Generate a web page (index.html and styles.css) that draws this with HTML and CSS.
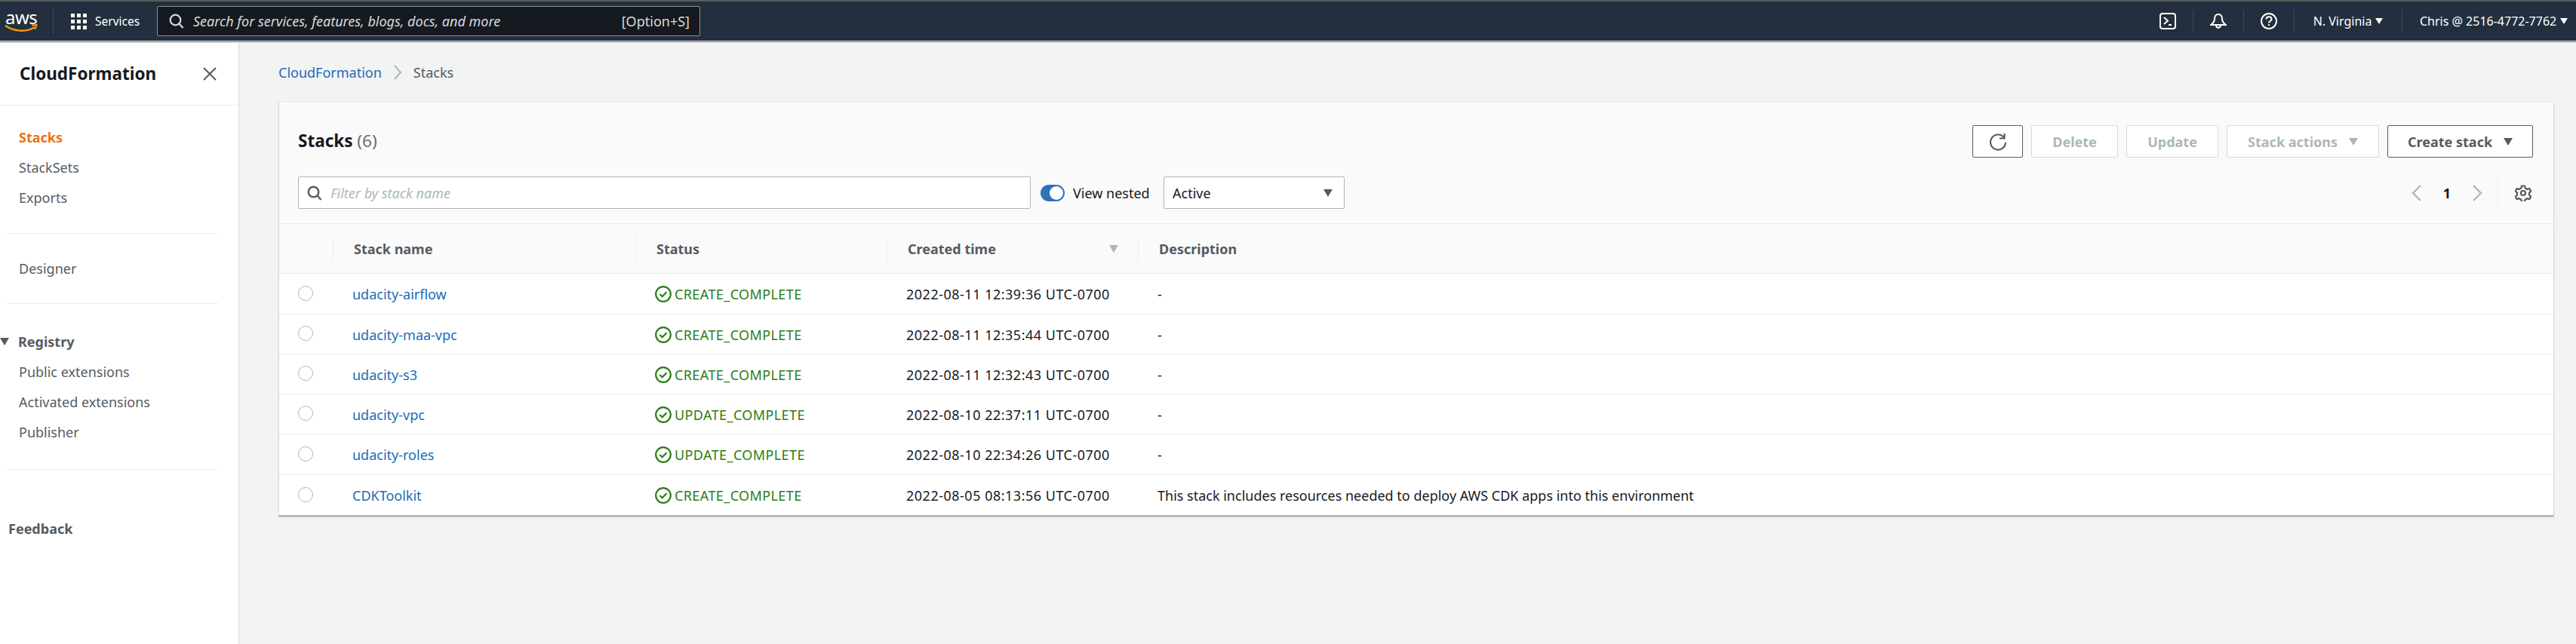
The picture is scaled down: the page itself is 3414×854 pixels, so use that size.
FILE: index.html
```html
<!DOCTYPE html>
<html lang="en">
<head>
    <meta charset="UTF-8">
    <meta name="viewport" content="width=device-width, initial-scale=1.0">
    <title>CloudFormation - Stacks</title>
    <link rel="stylesheet" href="styles.css">
</head>
<body>
    <header class="topbar">
        <div class="logo">
            <span class="logo-text">aws</span>
            <svg class="logo-smile" viewBox="0 0 44 11" width="44" height="11"><path d="M1 2c12 8 28 9 39 2" fill="none" stroke="#f90" stroke-width="2.4"/><path d="M36 1.5l6.5-.5-2 6" fill="none" stroke="#f90" stroke-width="2"/></svg>
        </div>
        <div class="services">
            <svg class="grid-icon" viewBox="0 0 21 21" width="21" height="21" fill="#fff"><rect width="5" height="5"/><rect x="8" width="5" height="5"/><rect x="16" width="5" height="5"/><rect y="8" width="5" height="5"/><rect x="8" y="8" width="5" height="5"/><rect x="16" y="8" width="5" height="5"/><rect y="16" width="5" height="5"/><rect x="8" y="16" width="5" height="5"/><rect x="16" y="16" width="5" height="5"/></svg>
            <span>Services</span>
        </div>
        <div class="top-search">
            <svg viewBox="0 0 20 20" width="20" height="20" fill="none" stroke="#d5dbdb" stroke-width="2.2"><circle cx="8.5" cy="8.5" r="6.8"/><path d="M13.5 13.5l5 5.5"/></svg>
            <span class="top-search-text">Search for services, features, blogs, docs, and more</span>
            <span class="top-search-key">[Option+S]</span>
        </div>
        <div class="top-right">
            <div class="top-item">
                <svg viewBox="0 0 22 22" width="22" height="22" fill="none" stroke="#fff" stroke-width="2"><rect x="1" y="1" width="20" height="20" rx="3"/><path d="M6 6l5 4.5L6 15"/><path d="M12 16h4"/></svg>
            </div>
            <div class="top-item">
                <svg viewBox="0 0 22 22" width="22" height="22" fill="none" stroke="#fff" stroke-width="2"><path d="M11 2c-3.500 0-5 3-5 6 0 3-2 6-5 8h20c-3-2-5-5-5-8 0-3-1.500-6-5-6z"/><path d="M8 16c0 5 6 5 6 0"/></svg>
            </div>
            <div class="top-item">
                <svg viewBox="0 0 22 22" width="22" height="22" fill="none" stroke="#fff" stroke-width="2"><circle cx="11" cy="11" r="10"/><path d="M7.500 8.500c0-4.500 7-4.500 7 0 0 2.500-3.500 2.500-3.500 5"/><path d="M11 15v2"/></svg>
            </div>
            <div class="top-item top-region">N. Virginia <span class="top-caret"></span></div>
            <div class="top-item top-user">Chris @ 2516-4772-7762 <span class="top-caret"></span></div>
        </div>
    </header>

    <div class="layout">
        <nav class="sidebar">
            <div class="side-head">
                <span class="side-title">CloudFormation</span>
                <svg viewBox="0 0 18 18" width="18" height="18" fill="none" stroke="#545b64" stroke-width="2"><path d="M1 1l16 16M17 1L1 17"/></svg>
            </div>
            <ul class="side-list side-first">
                <li class="side-active">Stacks</li>
                <li>StackSets</li>
                <li>Exports</li>
            </ul>
            <hr class="side-rule">
            <ul class="side-list side-single">
                <li>Designer</li>
            </ul>
            <hr class="side-rule">
            <div class="side-group"><span class="group-caret"></span>Registry</div>
            <ul class="side-list">
                <li>Public extensions</li>
                <li>Activated extensions</li>
                <li>Publisher</li>
            </ul>
            <hr class="side-rule side-rule-last">
            <div class="side-feedback">Feedback</div>
        </nav>

        <main class="content">
            <div class="crumbs">
                <a class="link">CloudFormation</a>
                <svg viewBox="0 0 12 20" width="12" height="20" fill="none" stroke="#aab7b8" stroke-width="2"><path d="M2 1l8 9-8 9"/></svg>
                <span>Stacks</span>
            </div>

            <section class="panel">
                <div class="panel-head">
                    <div class="head-row">
                        <h2 class="panel-title">Stacks <span class="panel-count">(6)</span></h2>
                        <div class="actions">
                            <button class="btn btn-refresh"><svg viewBox="0 0 22 24" width="22" height="24" fill="none" stroke="#545b64" stroke-width="2.200"><path d="M19 6.500A10 10 0 1 0 21 13"/><path d="M19.500 1v6.500H13"/></svg></button>
                            <button class="btn btn-off btn-delete">Delete</button>
                            <button class="btn btn-off btn-update">Update</button>
                            <button class="btn btn-off btn-stack">Stack actions <span class="caret caret-off"></span></button>
                            <button class="btn btn-create">Create stack <span class="caret"></span></button>
                        </div>
                    </div>
                    <div class="filter-row">
                        <div class="filter">
                            <svg viewBox="0 0 20 20" width="20" height="20" fill="none" stroke="#545b64" stroke-width="2.400"><circle cx="8.500" cy="8.500" r="6.800"/><path d="M13.500 13.500l5 5.500"/></svg>
                            <span>Filter by stack name</span>
                        </div>
                        <div class="nested">
                            <span class="toggle"><span class="toggle-knob"></span></span>
                            <span>View nested</span>
                        </div>
                        <div class="select"><span>Active</span><span class="caret"></span></div>
                        <div class="pager">
                            <svg viewBox="0 0 14 22" width="14" height="22" fill="none" stroke="#aab7b8" stroke-width="2.400"><path d="M12 1L2 11l10 10"/></svg>
                            <span class="page-num">1</span>
                            <svg viewBox="0 0 14 22" width="14" height="22" fill="none" stroke="#aab7b8" stroke-width="2.400"><path d="M2 1l10 10L2 21"/></svg>
                        </div>
                        <div class="settings">
                            <svg viewBox="0 0 22 22" width="22" height="22" fill="none" stroke="#545b64" stroke-width="2.200"><circle cx="11" cy="11" r="3"/><path d="M9 1.500h4l.700 3 2.600 1.500 3-.900 2 3.400-2.300 2.100v3l2.300 2.100-2 3.400-3-.900-2.600 1.500-.700 3H9l-.700-3-2.600-1.500-3 .900-2-3.400 2.300-2.100v-3L.700 8.500l2-3.400 3 .900L8.300 4.500z"/></svg>
                        </div>
                    </div>
                </div>

                <table class="stacks">
                    <colgroup>
                        <col class="col-radio">
                        <col class="col-name">
                        <col class="col-status">
                        <col class="col-time">
                        <col>
                    </colgroup>
                    <thead>
                        <tr>
                            <th></th>
                            <th><div class="th-in">Stack name</div></th>
                            <th><div class="th-in">Status</div></th>
                            <th><div class="th-in th-sort">Created time <span class="caret caret-off"></span></div></th>
                            <th><div class="th-in">Description</div></th>
                        </tr>
                    </thead>
                    <tbody>
                        <tr>
                            <td><span class="radio"></span></td>
                            <td><a class="link">udacity-airflow</a></td>
                            <td><div class="status"><svg viewBox="0 0 22 22" width="22" height="22" fill="none" stroke="#2b7d14" stroke-width="2.200"><circle cx="11" cy="11" r="9.800"/><path d="M6.500 11l3.200 3.200 5.800-6"/></svg>CREATE_COMPLETE</div></td>
                            <td class="time">2022-08-11 12:39:36 UTC-0700</td>
                            <td>-</td>
                        </tr>
                        <tr>
                            <td><span class="radio"></span></td>
                            <td><a class="link">udacity-maa-vpc</a></td>
                            <td><div class="status"><svg viewBox="0 0 22 22" width="22" height="22" fill="none" stroke="#2b7d14" stroke-width="2.200"><circle cx="11" cy="11" r="9.800"/><path d="M6.500 11l3.200 3.200 5.800-6"/></svg>CREATE_COMPLETE</div></td>
                            <td class="time">2022-08-11 12:35:44 UTC-0700</td>
                            <td>-</td>
                        </tr>
                        <tr>
                            <td><span class="radio"></span></td>
                            <td><a class="link">udacity-s3</a></td>
                            <td><div class="status"><svg viewBox="0 0 22 22" width="22" height="22" fill="none" stroke="#2b7d14" stroke-width="2.200"><circle cx="11" cy="11" r="9.800"/><path d="M6.500 11l3.200 3.200 5.800-6"/></svg>CREATE_COMPLETE</div></td>
                            <td class="time">2022-08-11 12:32:43 UTC-0700</td>
                            <td>-</td>
                        </tr>
                        <tr>
                            <td><span class="radio"></span></td>
                            <td><a class="link">udacity-vpc</a></td>
                            <td><div class="status"><svg viewBox="0 0 22 22" width="22" height="22" fill="none" stroke="#2b7d14" stroke-width="2.200"><circle cx="11" cy="11" r="9.800"/><path d="M6.500 11l3.200 3.200 5.800-6"/></svg>UPDATE_COMPLETE</div></td>
                            <td class="time">2022-08-10 22:37:11 UTC-0700</td>
                            <td>-</td>
                        </tr>
                        <tr>
                            <td><span class="radio"></span></td>
                            <td><a class="link">udacity-roles</a></td>
                            <td><div class="status"><svg viewBox="0 0 22 22" width="22" height="22" fill="none" stroke="#2b7d14" stroke-width="2.200"><circle cx="11" cy="11" r="9.800"/><path d="M6.500 11l3.200 3.200 5.800-6"/></svg>UPDATE_COMPLETE</div></td>
                            <td class="time">2022-08-10 22:34:26 UTC-0700</td>
                            <td>-</td>
                        </tr>
                        <tr>
                            <td><span class="radio"></span></td>
                            <td><a class="link">CDKToolkit</a></td>
                            <td><div class="status"><svg viewBox="0 0 22 22" width="22" height="22" fill="none" stroke="#2b7d14" stroke-width="2.200"><circle cx="11" cy="11" r="9.800"/><path d="M6.500 11l3.200 3.200 5.800-6"/></svg>CREATE_COMPLETE</div></td>
                            <td class="time">2022-08-05 08:13:56 UTC-0700</td>
                            <td>This stack includes resources needed to deploy AWS CDK apps into this environment</td>
                        </tr>
                    </tbody>
                </table>
            </section>
        </main>
    </div>
</body>
</html>
```

FILE: styles.css
```css
* {
    box-sizing: border-box;
}

body {
    font-family: "Noto Sans", Arial, sans-serif;
    font-size: 18px;
    color: #16191f;
    background-color: #f2f3f3;
    margin: 0;
    height: 854px;
    overflow: hidden;
    display: flex;
    flex-direction: column;
}

/* top bar */
.topbar {
    height: 57px;
    flex-shrink: 0;
    display: flex;
    align-items: center;
    background-color: #232f3e;
    border-top: 2px solid #5a5a5a;
    border-bottom: 3px solid #fff;
    color: #fff;
    position: relative;
    padding-left: 7px;
}

.topbar::after {
    content: "";
    position: absolute;
    left: 0;
    right: 0;
    bottom: -2px;
    height: 1px;
    background-color: #545b64;
}

.logo {
    width: 64px;
    height: 36px;
    border-right: 1px solid #414750;
    position: relative;
    flex-shrink: 0;
}

.logo-text {
    display: block;
    font-size: 24px;
    line-height: 24px;
    margin-top: 1px;
    letter-spacing: -0.5px;
}

.logo-smile {
    position: absolute;
    left: -1px;
    top: 22px;
}

.services {
    display: flex;
    align-items: center;
    gap: 11px;
    margin-left: 23px;
    width: 114px;
    font-size: 15.500px;
    flex-shrink: 0;
}

.top-search {
    width: 720px;
    height: 40px;
    display: flex;
    align-items: center;
    padding: 0 13px 0 15px;
    background-color: #16191f;
    border: 1px solid #879596;
    border-radius: 2px;
    color: #d5dbdb;
    font-size: 18px;
}

.top-search-text {
    font-style: italic;
    margin-left: 12px;
    flex-grow: 1;
}

.top-right {
    margin-left: auto;
    display: flex;
    align-items: center;
    font-size: 16px;
    height: 30px;
}

.top-item {
    height: 30px;
    display: flex;
    align-items: center;
    justify-content: center;
    width: 67px;
    border-right: 1px solid #414750;
}

.top-region {
    width: 143px;
    gap: 5px;
}

.top-user {
    width: 230px;
    border-right: none;
    gap: 5px;
    justify-content: flex-start;
    padding-left: 23px;
}

.top-caret {
    border-left: 5px solid transparent;
    border-right: 5px solid transparent;
    border-top: 8px solid #fff;
}

/* page */
.layout {
    flex-grow: 1;
    display: flex;
    min-height: 0;
}

.sidebar {
    width: 317px;
    flex-shrink: 0;
    background-color: #fff;
    border-right: 1px solid #d5dbdb;
    color: #545b64;
}

.side-head {
    height: 83px;
    display: flex;
    align-items: center;
    justify-content: space-between;
    padding: 0 29px 0 26px;
    border-bottom: 1px solid #eaeded;
}

.side-title {
    font-size: 22.500px;
    font-weight: 700;
    color: #16191f;
    margin-bottom: 2px;
}

.side-list {
    list-style: none;
    margin: 0;
    padding: 0 0 0 25px;
}

.side-list li {
    height: 40px;
    line-height: 40px;
}

.side-first {
    margin-top: 22px;
}

.side-single {
    margin: 26px 0;
}

.side-active {
    color: #ec7211;
    font-weight: 700;
}

.side-rule {
    border: none;
    border-top: 1px solid #eaeded;
    margin: 27px 27px 0 9px;
}

.side-single + .side-rule {
    margin-top: 0;
}

.side-rule-last {
    margin-top: 29px;
}

.side-group {
    display: flex;
    align-items: center;
    margin-top: 30px;
    height: 40px;
    font-weight: 700;
}

.group-caret {
    width: 0;
    border-left: 6px solid transparent;
    border-right: 6px solid transparent;
    border-top: 10px solid #545b64;
    margin-right: 12px;
}

.side-feedback {
    margin: 66px 0 0 11px;
    font-weight: 700;
}

.content {
    flex-grow: 1;
    min-width: 0;
    padding: 0 29px 0 52px;
}

.crumbs {
    height: 78px;
    display: flex;
    align-items: center;
    gap: 15px;
    color: #545b64;
}

.link {
    color: #1a6bb8;
}

/* stacks panel */
.panel {
    background-color: #fff;
    border-bottom: 2px solid #aab7b8;
    border-right: 1px solid #d5dbdb;
    border-left: 1px solid #d5dbdb;
    box-shadow: 0 1px 1px rgba(0, 22, 43, 0.15);
}

.panel-head {
    height: 162px;
    background-color: #fafafa;
    padding: 30px 27px 0 25px;
    border-top: 1px solid #eaeded;
    border-bottom: 1px solid #eaeded;
}

.head-row {
    display: flex;
    align-items: center;
    justify-content: space-between;
    height: 43px;
}

.panel-title {
    font-size: 22.500px;
    font-weight: 700;
    margin: 0 0 3px;
}

.panel-count {
    font-weight: 400;
    color: #687078;
}

.actions {
    display: flex;
    gap: 11px;
}

.btn {
    height: 43px;
    font-family: inherit;
    font-size: 18px;
    font-weight: 700;
    color: #545b64;
    background-color: #fff;
    border: 1px solid #545b64;
    border-radius: 2px;
    padding: 0;
    display: flex;
    align-items: center;
    justify-content: center;
}

.btn-refresh {
    width: 67px;
}

.btn-off {
    color: #aab7b8;
    border-color: #d5dbdb;
}

.btn-delete {
    width: 115px;
}

.btn-update {
    width: 122px;
}

.btn-stack {
    width: 202px;
    gap: 15px;
}

.btn-create {
    width: 193px;
    gap: 15px;
}

.caret {
    width: 0;
    border-left: 6px solid transparent;
    border-right: 6px solid transparent;
    border-top: 10px solid #545b64;
}

.caret-off {
    border-top-color: #aab7b8;
}

.filter-row {
    display: flex;
    align-items: center;
    margin-top: 25px;
    height: 43px;
}

.filter {
    width: 971px;
    height: 43px;
    display: flex;
    align-items: center;
    gap: 11px;
    padding-left: 11px;
    background-color: #fff;
    border: 1px solid #aab7b8;
    border-radius: 2px;
    color: #aab7b8;
    font-style: italic;
}

.nested {
    display: flex;
    align-items: center;
    gap: 11px;
    margin-left: 13px;
    width: 163px;
}

.toggle {
    width: 32px;
    height: 22px;
    border-radius: 11px;
    background-color: #2e73b8;
    display: flex;
    justify-content: flex-end;
    align-items: center;
    padding-right: 2px;
    flex-shrink: 0;
}

.toggle-knob {
    width: 18px;
    height: 18px;
    border-radius: 50%;
    background-color: #fff;
}

.select {
    width: 240px;
    height: 43px;
    display: flex;
    align-items: center;
    justify-content: space-between;
    padding: 0 15px 0 11px;
    background-color: #fff;
    border: 1px solid #aab7b8;
    border-radius: 2px;
}

.pager {
    margin-left: auto;
    display: flex;
    align-items: center;
    gap: 28px;
}

.page-num {
    font-weight: 700;
}

.settings {
    height: 40px;
    width: 47px;
    margin-left: 20px;
    display: flex;
    align-items: center;
    justify-content: flex-end;
    border-left: 1px solid #eaeded;
    padding-right: 2px;
}

/* table */
.stacks {
    width: 100%;
    border-collapse: collapse;
    table-layout: fixed;
}

.col-radio {
    width: 71px;
}

.col-name {
    width: 401px;
}

.col-status {
    width: 333px;
}

.col-time {
    width: 333px;
}

.stacks th {
    height: 65px;
    padding: 2px 0 0;
    background-color: #fafafa;
    text-align: left;
    color: #545b64;
    font-weight: 700;
    border-bottom: 1px solid #eaeded;
}

.th-in {
    height: 32px;
    line-height: 32px;
    padding-left: 27px;
    border-left: 1px solid #eaeded;
}

.th-sort {
    display: flex;
    align-items: center;
    justify-content: space-between;
    padding-right: 26px;
}

.stacks td {
    height: 53px;
    padding: 2px 0 0 26px;
    border-bottom: 1px solid #eaeded;
    white-space: nowrap;
}

.stacks td:first-child {
    padding-left: 25px;
}

.stacks tr:first-child td,
.stacks tr:nth-last-child(-n+2) td {
    height: 54px;
}

.stacks tr:last-child td {
    border-bottom: none;
}

.time {
    letter-spacing: 0.5px;
}

.radio {
    display: block;
    width: 20px;
    height: 20px;
    margin-bottom: 3px;
    border-radius: 50%;
    background-color: #fff;
    border: 1px solid #aab7b8;
}

.status {
    display: flex;
    align-items: center;
    gap: 4px;
    color: #2b7d14;
    letter-spacing: 0.4px;
}
```
